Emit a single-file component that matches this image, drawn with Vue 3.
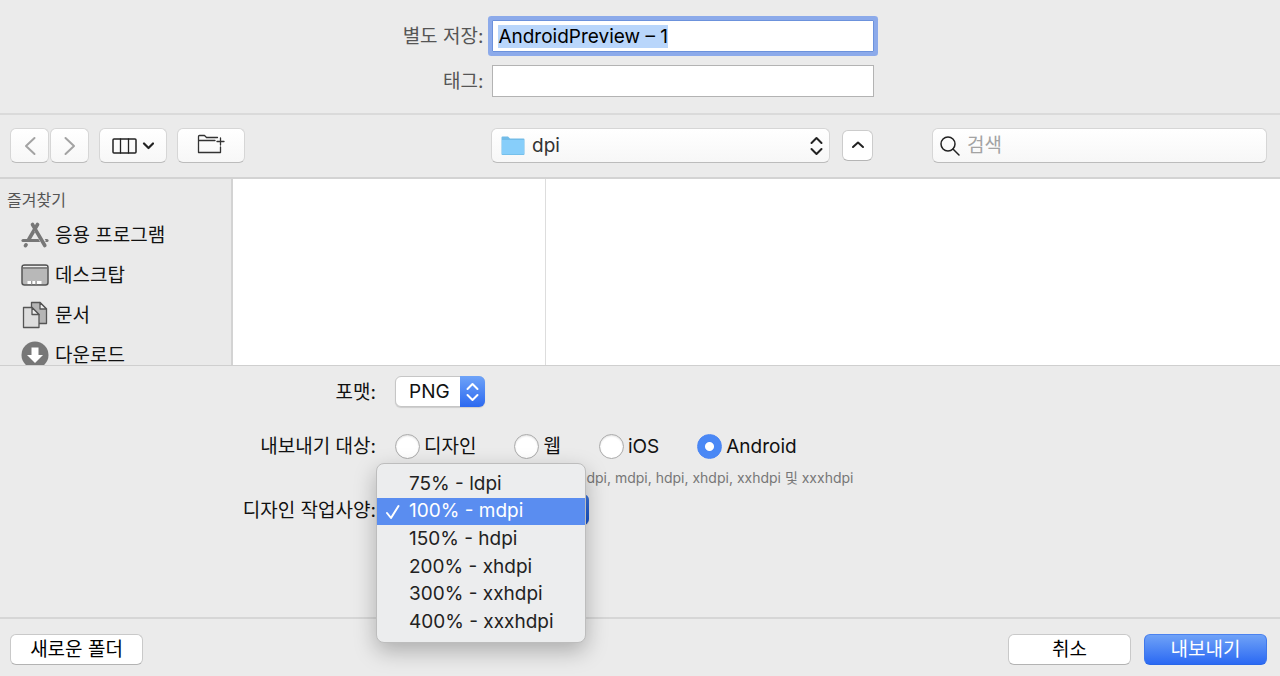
<script setup>
import { onMounted, ref } from 'vue'

const nameInput = ref(null)
const fileName = ref('AndroidPreview – 1')
const tags = ref('')
const query = ref('')
const target = ref('Android')
const scale = ref('100% - mdpi')

const targets = ['디자인', '웹', 'iOS', 'Android']
const scales = ['75% - ldpi', '100% - mdpi', '150% - hdpi', '200% - xhdpi', '300% - xxhdpi', '400% - xxxhdpi']

onMounted(() => {
  nameInput.value.focus()
  nameInput.value.select()
})
</script>

<template>
  <form class="dialog" @submit.prevent>
    <header class="naming">
      <label for="name">별도 저장:</label>
      <input id="name" ref="nameInput" v-model="fileName" class="field name" type="text" spellcheck="false" autocomplete="off" />
      <label for="tags">태그:</label>
      <input id="tags" v-model="tags" class="field" type="text" />
    </header>

    <div class="toolbar">
      <div class="tools">
        <div class="pair">
          <button type="button" class="tool nav" aria-label="뒤로">
            <svg width="12" height="20" viewBox="0 0 12 20"><path d="M10.500 2 2 10l8.500 8" /></svg>
          </button>
          <button type="button" class="tool nav" aria-label="앞으로">
            <svg width="12" height="20" viewBox="0 0 12 20"><path d="M1.500 2 10 10l-8.500 8" /></svg>
          </button>
        </div>
        <button type="button" class="tool wide" aria-label="보기">
          <svg width="42" height="16" viewBox="0 0 42 16">
            <rect x="1" y="1" width="23" height="14" rx="1" stroke-width="1.500" />
            <path d="M8.500 1v14M16.500 1v14" stroke-width="1.300" />
            <path d="m32 5.500 4.500 4.500L41 5.500" stroke-width="2.200" />
          </svg>
        </button>
        <button type="button" class="tool wide folder" aria-label="그룹">
          <svg width="28" height="20" viewBox="0 0 28 20">
            <path d="M23.500 13V18.500H1.500V2.500Q1.500 1.500 2.500 1.500H7.500L9.500 3.500H20.500M1.500 6.500H18M23.500 4v7M20 7.500h7" />
          </svg>
        </button>
      </div>

      <div class="place">
        <div class="path">
          <svg class="dir" width="24" height="20" viewBox="0 0 24 20">
            <path d="M.5 1.500Q.5.5 1.500.5H7L9 2.500H22.500Q23.500 2.500 23.500 3.500V18Q23.500 19 22.500 19H1.500Q.5 19 .5 18Z" fill="#72bce8" />
            <path d="M1 4H23V18.200H1Z" fill="#87cefa" />
          </svg>
          <select aria-label="위치"><option>dpi</option></select>
          <svg class="updown" width="13" height="20" viewBox="0 0 13 20"><path d="m1.500 7 5-5 5 5M1.500 13l5 5 5-5" /></svg>
        </div>
        <button type="button" class="collapse" aria-label="접기">
          <svg width="14" height="10" viewBox="0 0 14 10"><path d="m2 7 5-4.500L12 7" /></svg>
        </button>
      </div>

      <div class="search">
        <svg width="20" height="20" viewBox="0 0 20 20"><circle cx="8" cy="8" r="7" /><path d="m13 13 6 6" /></svg>
        <input v-model="query" type="search" placeholder="검색" aria-label="검색" />
      </div>
    </div>

    <div class="browser">
      <nav class="sidebar">
        <h2>즐겨찾기</h2>
        <a href="#">
          <svg width="28" height="26" viewBox="0 0 28 26" fill="none" stroke="#777" stroke-linecap="round">
            <path d="M2 18.500h24" stroke-width="3.200" />
            <path d="M16.500 2.500 8 17M5 22.800 4.500 23.600" stroke-width="3.600" />
            <path d="M15.500 7.500 22.500 20.500" stroke="#eaeaea" stroke-width="5.600" stroke-linecap="butt" />
            <path d="M11.500 2.500 14 6.800l9.800 16.700" stroke-width="3.600" />
          </svg>
          <span>응용 프로그램</span>
        </a>
        <a href="#">
          <svg width="28" height="22" viewBox="0 0 28 22">
            <rect x="1" y="1" width="26" height="20" rx="2.500" fill="#b8b8b8" stroke="#555" stroke-width="1.500" />
            <path d="M2 2.500H26" stroke="#eee" /><path d="M2 4H26" stroke="#555" />
            <path d="M6.500 18.500h3.500m1.500 0h3m1.500 0h4.500" stroke="#fff" stroke-width="3" />
            <path d="M10.500 17v3.500m4.500-3.500v3.500" stroke="#999" />
          </svg>
          <span>데스크탑</span>
        </a>
        <a href="#">
          <svg width="28" height="28" viewBox="0 0 28 28" stroke="#555" stroke-width="1.300" stroke-linejoin="round">
            <path d="M10.500 1.500H19L25.500 8V22.500H10.500Z" fill="#b5b5b5" />
            <path d="M19 1.500V8h6.500Z" fill="#eee" />
            <path d="M2.500 6.500H11L18 13.500V26.500H2.500Z" fill="#ddd" />
            <path d="M11 6.500V13.500h7Z" fill="#eee" />
          </svg>
          <span>문서</span>
        </a>
        <a href="#">
          <svg width="28" height="28" viewBox="0 0 28 28">
            <circle cx="14" cy="14" r="13.500" fill="#777" />
            <path d="M10.500 6.500h7V14H22l-8 8-8-8h4.500Z" fill="#fff" />
          </svg>
          <span>다운로드</span>
        </a>
      </nav>
      <div class="column"></div>
      <div class="rest"></div>
    </div>

    <section class="options">
      <label for="format">포맷:</label>
      <div class="popup format">
        <select id="format"><option>PNG</option></select>
        <span class="stepper">
          <svg width="13" height="20" viewBox="0 0 13 20"><path d="m1.500 7 5-5 5 5M1.500 13l5 5 5-5" /></svg>
        </span>
      </div>

      <span id="target-label" class="target-label">내보내기 대상:</span>
      <div class="targets" role="radiogroup" aria-labelledby="target-label">
        <label v-for="t in targets" :key="t">
          <input v-model="target" type="radio" name="target" :value="t" />
          <span>{{ t }}</span>
        </label>
      </div>

      <p class="note">ldpi, mdpi, hdpi, xhdpi, xxhdpi 및 xxxhdpi</p>

      <label for="scale">디자인 작업사양:</label>
      <div class="popup scale">
        <select id="scale" v-model="scale">
          <option v-for="s in scales" :key="s">{{ s }}</option>
        </select>
        <span class="stepper"></span>
        <div class="menu" role="listbox" aria-label="디자인 작업사양">
          <button
            v-for="s in scales"
            :key="s"
            type="button"
            role="option"
            :aria-selected="s === scale"
            :class="{ current: s === scale }"
            @click="scale = s"
          >
            <svg v-if="s === scale" width="16" height="16" viewBox="0 0 16 16"><path d="m2 9 4 5 7.500-12" /></svg>
            {{ s }}
          </button>
        </div>
      </div>
    </section>

    <footer>
      <button type="button" class="push folder-new">새로운 폴더</button>
      <button type="button" class="push">취소</button>
      <button type="submit" class="push primary">내보내기</button>
    </footer>
  </form>
</template>

<style>
body {
  margin: 0;
  background: #ebebeb;
}
</style>

<style scoped>
.dialog,
.dialog * {
  box-sizing: border-box;
}
.dialog {
  display: flex;
  flex-direction: column;
  min-height: 100vh;
  background: #ebebeb;
  color: #111;
  font: 19px/24px Inter, "Noto Sans CJK KR", sans-serif;
}
button,
input,
select {
  margin: 0;
  font: inherit;
  color: inherit;
}
select {
  appearance: none;
  outline: none;
}
svg {
  display: block;
  flex: none;
}

.naming {
  display: grid;
  grid-template-columns: auto 382px;
  justify-content: center;
  align-items: center;
  gap: 13px 9px;
  padding: 20px 3px 16px 0;
  border-bottom: 2px solid #dadada;
}
.naming label {
  padding-top: 2px;
  text-align: right;
  color: #555;
}
.field {
  width: 100%;
  height: 32px;
  padding: 3px 5px;
  border: 1px solid #b3b3b3;
  border-radius: 0;
  background: #fff;
  color: #000;
  outline: none;
}
.name:focus {
  border-color: #6c92dc;
  box-shadow: 0 0 0 4px #8caaea;
  border-radius: 1px;
}
.name::selection {
  background: #b9d6fb;
  color: #000;
}

.toolbar {
  display: grid;
  grid-template-columns: minmax(0, 481fr) minmax(0, 382fr) minmax(0, 394fr);
  align-items: center;
  padding: 13px 13px 14px 10px;
  border-bottom: 2px solid #d3d3d3;
}
.tools,
.pair,
.place,
.search {
  display: flex;
  align-items: center;
}
.tools {
  gap: 10px;
}
.pair {
  gap: 1px;
}
.tool,
.path select,
.search {
  height: 35px;
  border: 1px solid #d6d6d6;
  border-bottom-color: #bcbcbc;
  border-radius: 6px;
  background: linear-gradient(#fff, #f7f7f7);
}
.tool {
  display: flex;
  align-items: center;
  justify-content: center;
  width: 68px;
  padding: 0;
}
.nav {
  width: 39px;
}
.tool svg,
.updown,
.collapse svg,
.search svg,
.stepper svg,
.menu svg {
  fill: none;
  stroke: #222;
  stroke-width: 2;
  stroke-linecap: round;
  stroke-linejoin: round;
}
.nav svg {
  stroke: #a3a3a3;
}
.folder {
  padding-bottom: 3px;
}
.folder svg {
  stroke: #333;
  stroke-width: 1.300;
}
.place {
  gap: 12px;
}
.path {
  position: relative;
  flex: 1;
}
.path select {
  width: 100%;
  padding: 0 40px;
  color: #333;
}
.dir {
  position: absolute;
  left: 10px;
  top: 8px;
}
.updown {
  position: absolute;
  right: 7px;
  top: 8px;
}
.collapse {
  display: flex;
  align-items: center;
  justify-content: center;
  width: 31px;
  height: 31px;
  padding: 0 0 2px;
  border: 1px solid #ccc;
  border-bottom-color: #b5b5b5;
  border-radius: 6px;
  background: #fff;
}
.search {
  gap: 7px;
  margin-left: 59px;
  padding: 0 7px;
}
.search svg {
  stroke-width: 1.500;
}
.search input {
  flex: 1;
  min-width: 0;
  height: 28px;
  padding: 0;
  border: 0;
  background: none;
  outline: none;
}
.search input::placeholder {
  color: #a3a3a3;
}

.browser {
  flex: 1 1 0;
  display: grid;
  grid-template-columns: 233px 313px 1fr;
  grid-template-rows: 100%;
  min-height: 184px;
  overflow: hidden;
  background: #fff;
}
.sidebar {
  overflow: hidden;
  padding: 11px 0 0 7px;
  border-right: 2px solid #d3d3d3;
  background: #eaeaea;
}
.sidebar h2 {
  margin: 0 0 5px;
  font-size: 16px;
  line-height: 20px;
  font-weight: 400;
  color: #555;
}
.sidebar a {
  display: flex;
  align-items: center;
  gap: 6px;
  height: 40px;
  padding-left: 14px;
  color: #111;
  text-decoration: none;
}
.sidebar span {
  padding-top: 2px;
}
.column {
  border-right: 1px solid #ddd;
}

.options {
  display: grid;
  grid-template-columns: 376fr 885fr;
  align-items: center;
  column-gap: 19px;
  padding: 10px 0 92px;
  border-top: 1px solid #cfcfcf;
}
.options > label,
.target-label {
  padding-top: 2px;
  text-align: right;
}
.popup {
  position: relative;
  height: 31px;
}
.popup select {
  width: 100%;
  height: 100%;
  padding: 0 13px;
  border: 1px solid #c6c6c6;
  border-radius: 6px;
  background: #fff;
  box-shadow: 0 1px 1px #0002;
}
.format {
  width: 90px;
}
.scale {
  width: 194px;
}
.stepper {
  position: absolute;
  inset: 0 0 0 auto;
  display: flex;
  align-items: center;
  justify-content: center;
  width: 25px;
  border-radius: 0 6px 6px 0;
  background: linear-gradient(#6ea3f8, #2c69f0);
  pointer-events: none;
}
.stepper svg {
  stroke: #fff;
}
.scale .stepper {
  background: linear-gradient(#3d74dc, #1450c8);
}
.target-label,
.targets {
  margin-top: 26px;
}
.targets {
  display: flex;
  gap: 38px;
}
.targets label {
  display: flex;
  align-items: center;
  gap: 4px;
}
.targets span {
  padding-top: 2px;
}
.targets input {
  appearance: none;
  width: 25px;
  height: 25px;
  border: 1px solid #aaa;
  border-radius: 50%;
  background: #fff;
  box-shadow: inset 0 1px 2px #0002;
}
.targets input:checked {
  border-color: #4a85f4;
  background: radial-gradient(circle, #fff 4px, #4a88f5 5px);
  box-shadow: none;
}
.note {
  grid-column: 2;
  margin: 9px 0 6px;
  padding-left: 188px;
  font-size: 14px;
  line-height: 20px;
  color: #777;
}
.menu {
  position: absolute;
  z-index: 1;
  top: -31px;
  left: -19px;
  display: grid;
  grid-auto-rows: 1fr;
  width: 210px;
  height: 180px;
  padding: 6px 0;
  border: 1px solid #bdbdbd;
  border-radius: 8px;
  background: #ecedee;
  box-shadow: 0 8px 22px #0004;
}
.menu button {
  position: relative;
  padding: 0 0 0 32px;
  border: 0;
  background: none;
  text-align: left;
  color: #222;
}
.menu .current {
  background: #5a8df0;
  color: #fff;
}
.menu svg {
  position: absolute;
  left: 8px;
  top: 6px;
  stroke: #fff;
}

footer {
  display: flex;
  gap: 13px;
  padding: 15px 13px 11px 10px;
  border-top: 2px solid #d6d6d6;
}
.push {
  width: 123px;
  height: 31px;
  padding: 0;
  border: 1px solid #c9c9c9;
  border-bottom-color: #b3b3b3;
  border-radius: 6px;
  background: #fff;
  color: #000;
}
.folder-new {
  width: 133px;
  margin-right: auto;
}
.primary {
  border-color: #4b82ef #3f78ec #2866e8;
  background: linear-gradient(#6fa2f7, #2b69f3);
  color: #fff;
}
</style>
